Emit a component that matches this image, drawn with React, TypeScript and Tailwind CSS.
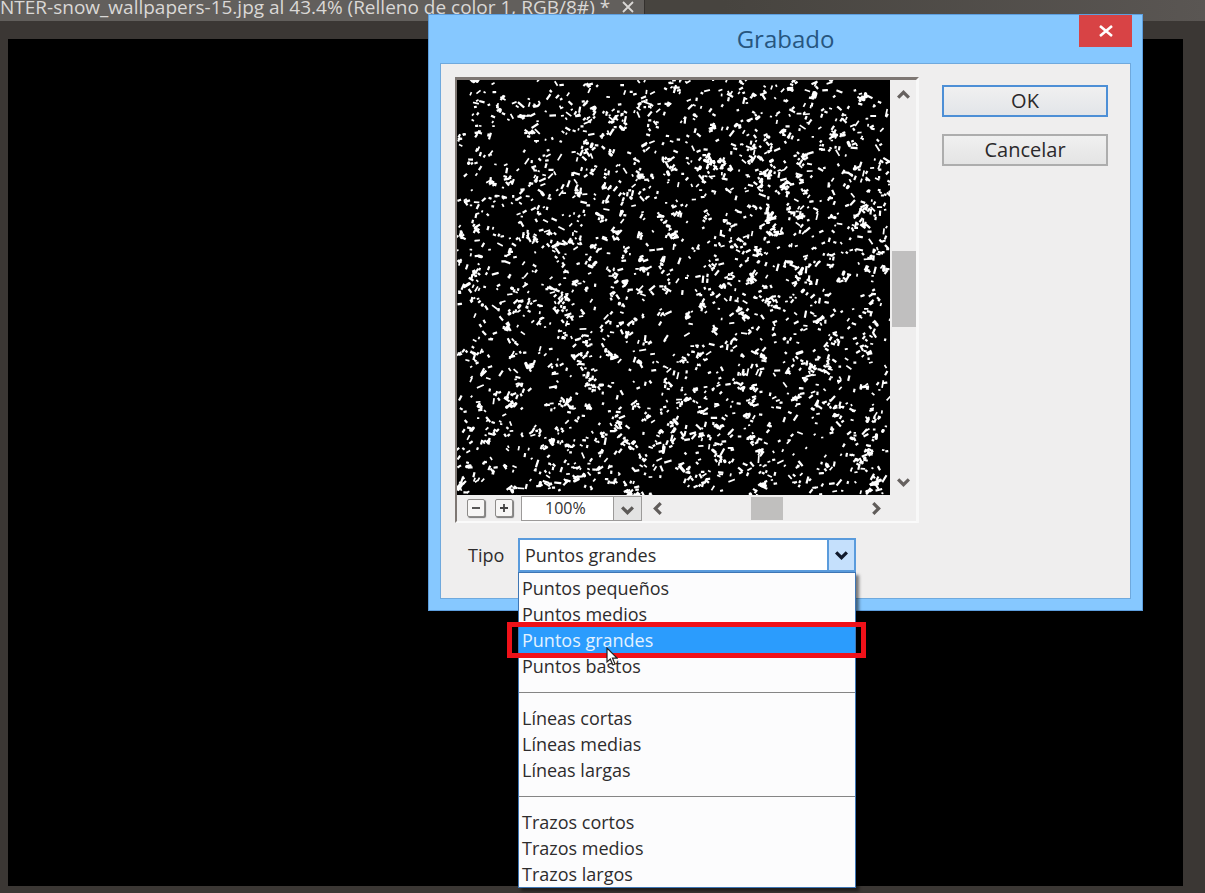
import React from "react";

type Entry = { label: string } | null;

const TYPES: Entry[] = [
  { label: "Puntos pequeños" },
  { label: "Puntos medios" },
  { label: "Puntos grandes" },
  { label: "Puntos bastos" },
  null,
  { label: "Líneas cortas" },
  { label: "Líneas medias" },
  { label: "Líneas largas" },
  null,
  { label: "Trazos cortos" },
  { label: "Trazos medios" },
  { label: "Trazos largos" },
];

const SELECTED = "Puntos grandes";

function Chevron({ d, className }: { d: string; className: string }) {
  return (
    <svg viewBox="0 0 14 14" className={className} fill="none" stroke="currentColor" strokeWidth="3" aria-hidden="true">
      <path d={d} />
    </svg>
  );
}

const UP = "M2 10 L7 5 L12 10";
const DOWN = "M2 4 L7 9 L12 4";
const LEFT = "M10 2 L5 7 L10 12";
const RIGHT = "M4 2 L9 7 L4 12";

// Mezzotint grain: short seeded strokes, part scattered evenly, part gathered in clumps.
const GRAIN_W = 433;
const GRAIN_H = 415;

function makeGrain(): [string, string, string] {
  let state = 20151;
  const rnd = () => {
    state = (state * 1664525 + 1013904223) % 4294967296;
    return state / 4294967296;
  };
  const layers: [string, string, string] = ["", "", ""];
  const stroke = (x: number, y: number, maxLength: number, layer: number) => {
    const angle = rnd() < 0.65 ? -rnd() * 1.5 : rnd() * 1.2;
    const length = 0.4 + rnd() * rnd() * maxLength;
    const dx = Math.cos(angle) * length;
    const dy = Math.sin(angle) * length;
    layers[layer] += `M${x.toFixed(1)} ${y.toFixed(1)}l${dx.toFixed(1)} ${dy.toFixed(1)}`;
  };
  for (let i = 0; i < 1750; i++) {
    stroke(rnd() * GRAIN_W, rnd() * GRAIN_H, 6, rnd() < 0.5 ? 0 : 1);
  }
  for (let i = 0; i < 420; i++) {
    const cx = rnd() * GRAIN_W;
    const cy = rnd() * GRAIN_H;
    const count = 2 + Math.floor(rnd() * 3);
    for (let k = 0; k < count; k++) {
      const spread = 3 + rnd() * 7;
      stroke(cx + (rnd() - 0.5) * spread, cy + (rnd() - 0.5) * spread, 6, rnd() < 0.15 ? 2 : 1);
    }
  }
  return layers;
}

const GRAIN = makeGrain();

function Preview() {
  return (
    <svg
      viewBox={`0 0 ${GRAIN_W} ${GRAIN_H}`}
      preserveAspectRatio="xMidYMid slice"
      className="block h-full w-full bg-black"
      fill="none"
      stroke="#fff"
      aria-hidden="true"
    >
      <path d={GRAIN[0]} strokeWidth="1.7" strokeLinecap="square" />
      <path d={GRAIN[1]} strokeWidth="2.2" strokeLinecap="square" />
      <path d={GRAIN[2]} strokeWidth="3.2" strokeLinecap="round" />
    </svg>
  );
}

function ZoomButton({ label, plus }: { label: string; plus?: boolean }) {
  return (
    <button
      type="button"
      aria-label={label}
      className="flex size-[18px] items-center justify-center rounded-xs border border-[#8e8c8a] bg-[#f7f6f5] text-[#444] shadow-[1px_1px_1px_#777]"
    >
      <svg viewBox="0 0 10 10" className="size-[10px]" stroke="currentColor" strokeWidth="1.8" aria-hidden="true">
        <path d={plus ? "M1 5H9M5 1V9" : "M1 5H9"} />
      </svg>
    </button>
  );
}

function PreviewPane() {
  return (
    <div className="w-[464px] border-t-3 border-r-3 border-b-2 border-l-2 border-t-[#7e7773] border-r-[#f8f8f8] border-b-[#fafafa] border-l-[#7e7773]">
      <div className="flex h-[415px]">
        <div className="min-w-0 flex-1">
          <Preview />
        </div>
        <div className="flex w-[26px] flex-col items-center bg-[#efeeee] pt-[7px] pb-[5px] text-[#66615f]">
          <button type="button" aria-label="Subir">
            <Chevron d={UP} className="size-[15px]" />
          </button>
          <div className="flex w-full flex-1 flex-col">
            <div className="flex-1" />
            <div className="h-[76px] w-6 self-end bg-[#c0bfbf]" />
            <div className="flex-1" />
          </div>
          <button type="button" aria-label="Bajar">
            <Chevron d={DOWN} className="size-[15px]" />
          </button>
        </div>
      </div>
      <div className="flex h-[26px] items-center pr-8 pl-[10px]">
        <ZoomButton label="Reducir" />
        <div className="ml-[10px]">
          <ZoomButton label="Ampliar" plus />
        </div>
        <div className="relative ml-2 h-[25px] w-[121px]">
          <select
            aria-label="Zoom"
            className="block h-full w-full appearance-none border border-[#9c9a99] bg-white pl-[23px] text-[16px] leading-5 text-[#333]"
          >
            <option>100%</option>
          </select>
          <span className="pointer-events-none absolute inset-y-0 right-0 flex w-[29px] items-center justify-center border border-[#9c9a99] bg-[#e3e3e3] pt-1 text-[#5c5957]">
            <Chevron d={DOWN} className="size-[15px]" />
          </span>
        </div>
        <div className="ml-2 flex h-full min-w-0 flex-1 items-center text-[#605c5a]">
          <button type="button" aria-label="Izquierda">
            <Chevron d={LEFT} className="size-[15px]" />
          </button>
          <div className="flex h-[23px] flex-1">
            <div className="flex-1" />
            <div className="w-8 bg-[#c0bfbe]" />
            <div className="flex-1" />
          </div>
          <button type="button" aria-label="Derecha">
            <Chevron d={RIGHT} className="size-[15px]" />
          </button>
        </div>
      </div>
    </div>
  );
}

function Pointer() {
  return (
    <svg viewBox="0 0 12 19" className="absolute top-5 left-[87px] z-20 h-[19px] w-3" aria-hidden="true">
      <path d="M1 1V15L4.3 12L6.8 18L9 17L6.5 11.2H11Z" fill="#fff" stroke="#222" strokeWidth="1.2" />
    </svg>
  );
}

function TypeList() {
  return (
    <ul
      role="listbox"
      aria-label="Tipo"
      className="absolute top-full right-0 left-0 z-10 border border-[#3e76b5] bg-[#fcfcfd] pt-[2px] shadow-[3px_3px_3px_rgba(0,0,0,0.5)]"
    >
      {TYPES.map((entry, i) =>
        entry === null ? (
          <li key={i} role="separator" className="flex h-[26px] items-center">
            <span className="h-px w-full bg-[#858585]" />
          </li>
        ) : entry.label === SELECTED ? (
          <li key={i} role="option" aria-selected="true" className="relative h-[26px] bg-[#2b9cfd] px-[3px] leading-[26px] text-[#e3f2ff]">
            {entry.label}
            <span className="absolute -top-[5px] -right-[11px] -bottom-[5px] -left-3 z-10 border-5 border-[#ef1119]" />
            <Pointer />
          </li>
        ) : (
          <li key={i} role="option" aria-selected="false" className="h-[26px] px-[3px] leading-[26px]">
            {entry.label}
          </li>
        ),
      )}
    </ul>
  );
}

function TypeField() {
  return (
    <div className="mt-[15px] flex items-center pl-[13px] text-[18px] text-[#2e2c2d]">
      <label htmlFor="tipo" className="w-[50px]">
        Tipo
      </label>
      <div className="relative w-[338px]">
        <select
          id="tipo"
          defaultValue={SELECTED}
          className="block h-[34px] w-full appearance-none border-2 border-[#5a9bdc] bg-white pl-[5px] leading-6"
        >
          {TYPES.map((entry, i) => (entry ? <option key={i}>{entry.label}</option> : null))}
        </select>
        <span className="pointer-events-none absolute inset-y-0 right-0 flex w-[29px] items-center justify-center border-2 border-[#5a9bdc] bg-[#c5e0fc] text-[#111a2c]">
          <Chevron d={DOWN} className="size-[15px]" />
        </span>
        <TypeList />
      </div>
    </div>
  );
}

function EngraveDialog() {
  return (
    <section
      role="dialog"
      aria-labelledby="dialog-title"
      className="absolute top-[14px] left-[428px] w-[715px] border border-[#5d9ede] bg-[#86c8ff] px-[11px] pb-[11px]"
    >
      <header className="relative flex h-12 items-center justify-center">
        <h1 id="dialog-title" className="text-[24px] leading-8 text-[#27567f]">
          Grabado
        </h1>
        <button
          type="button"
          aria-label="Cerrar"
          className="absolute top-0 -right-px flex h-8 w-[53px] items-center justify-center bg-[#d84345] text-white"
        >
          <svg viewBox="0 0 14 14" className="size-[14px]" stroke="currentColor" strokeWidth="2.6" aria-hidden="true">
            <path d="M1 2L13 12M13 2L1 12" />
          </svg>
        </button>
      </header>
      <div className="flex border border-[#6fa9dd] bg-[#efeeee] pt-[13px] pr-[22px] pb-[26px] pl-[14px]">
        <div>
          <PreviewPane />
          <TypeField />
        </div>
        <div className="ml-[23px] flex flex-1 flex-col gap-[17px] pt-2 text-[20px] leading-6 text-[#2b292b]">
          <button type="button" className="h-8 border-2 border-[#4d8fd6] bg-linear-to-b from-[#f0f0f0] to-[#e2e5e9]">
            OK
          </button>
          <button type="button" className="h-8 border-2 border-[#adadad] bg-linear-to-b from-[#f0f0f0] to-[#e4e4e4]">
            Cancelar
          </button>
        </div>
      </div>
    </section>
  );
}

export default function App() {
  return (
    <main className="relative flex min-h-screen flex-col overflow-hidden bg-[#3b3734] font-['Open_Sans','Noto_Sans',sans-serif]">
      <div className="flex h-[21px] bg-linear-to-r from-[#47443f] from-60% to-[#5a5653]">
        <div className="flex h-full w-[645px] items-center justify-between border-r border-[#34312e] bg-[#625f5c] pr-[10px] pb-[7px] text-[19px] leading-5 font-medium whitespace-nowrap text-[#dad8d6]">
          <span>NTER-snow_wallpapers-15.jpg al 43.4% (Relleno de color 1, RGB/8#) *</span>
          <button type="button" aria-label="Cerrar documento">
            <svg viewBox="0 0 12 12" className="size-3" stroke="currentColor" strokeWidth="1.8" aria-hidden="true">
              <path d="M1 1L11 11M11 1L1 11" />
            </svg>
          </button>
        </div>
      </div>
      <div className="mt-[18px] mr-[22px] mb-[7px] ml-2 flex-1 bg-black" />
      <EngraveDialog />
    </main>
  );
}
